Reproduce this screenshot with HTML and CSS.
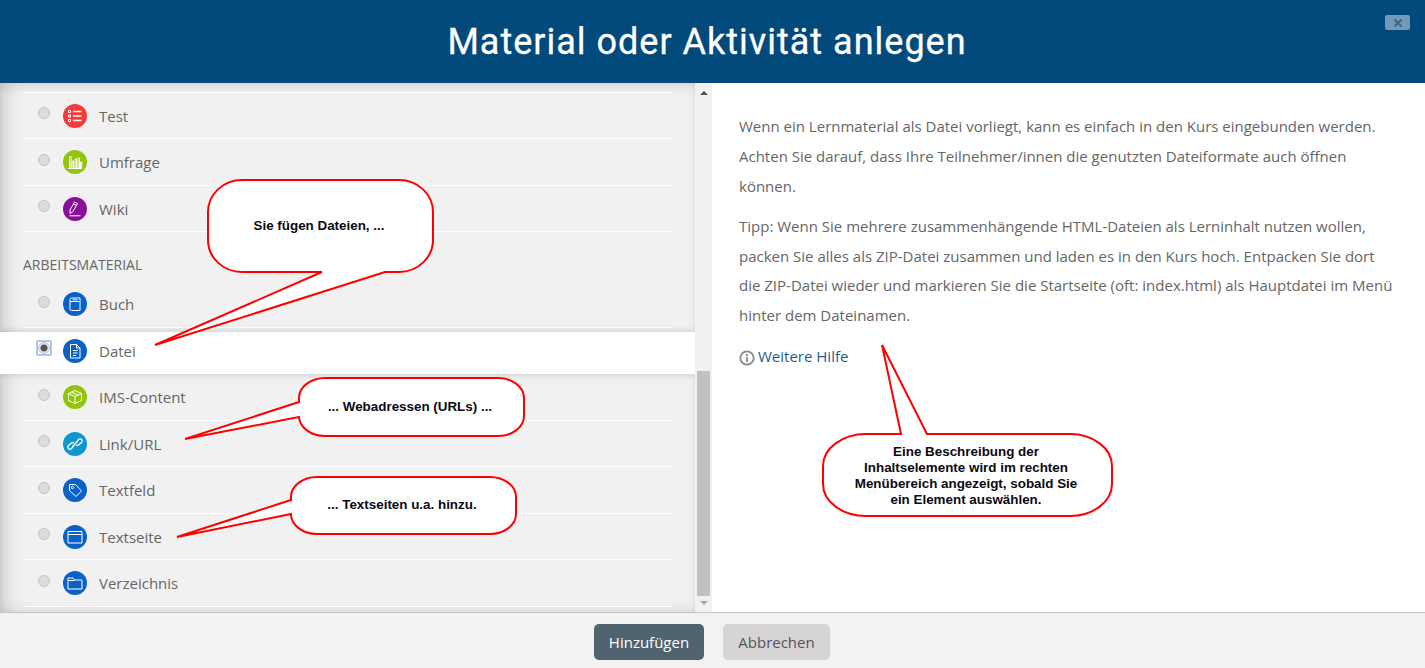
FILE: index.html
```html
<!DOCTYPE html>
<html lang="de">

<head>
  <meta charset="UTF-8">
  <title>Material oder Aktivität anlegen</title>
  <link rel="stylesheet" href="styles.css">
</head>

<body>
  <header class="dialog-head">
    <h1>Material oder Aktivität anlegen</h1>
    <button class="close-btn" type="button" aria-label="Schließen">
      <svg viewBox="0 0 10 10" width="10" height="10"><path d="M1.5 1.5l7 7M8.5 1.5l-7 7" /></svg>
    </button>
  </header>

  <main class="dialog-body">
    <section class="chooser">
      <div class="row row-first">
        <input type="radio" name="module" class="radio">
        <span class="icon icon-red">
          <svg viewBox="0 0 24 24"><path d="M10 7.500h8.500M10 12h8.500M10 16.500h8.500" stroke-width="1.300" /><path d="M5.500 6.500h2v2h-2zM5.500 11h2v2h-2zM5.500 15.500h2v2h-2z" /></svg>
        </span>
        <span class="label">Test</span>
      </div>
      <div class="row">
        <input type="radio" name="module" class="radio">
        <span class="icon icon-green">
          <svg viewBox="0 0 24 24"><path d="M5 18.500h14M6.500 18V6.500h1.500V18M9 18v-7h1.500v7M12 18V9h1.500v9M15 18V8h1.500v10M17.500 18v-6h1.200v6" /></svg>
        </span>
        <span class="label">Umfrage</span>
      </div>
      <div class="row">
        <input type="radio" name="module" class="radio">
        <span class="icon icon-purple">
          <svg viewBox="0 0 24 24"><path d="M7 16.500v-3.500l4.500-8 3 1.500-4.500 8zM10.500 7l3 1.500M6.500 18.800h11" /></svg>
        </span>
        <span class="label">Wiki</span>
      </div>

      <h2 class="group-title">Arbeitsmaterial</h2>

      <div class="row">
        <input type="radio" name="module" class="radio">
        <span class="icon icon-blue">
          <svg viewBox="0 0 24 24"><path d="M7 7.500q0-1.500 1.500-1.500h8.500v12.500H8.500Q7 18.500 7 17zM7 9.500h10M9.500 7.800h5" /></svg>
        </span>
        <span class="label">Buch</span>
      </div>
      <div class="row row-selected">
        <span class="focus-ring"><input type="radio" name="module" class="radio" checked></span>
        <span class="icon icon-blue">
          <svg viewBox="0 0 24 24"><path d="M7.500 5.500h6l3.500 3.500v10H7.500zM13.500 5.500V9H17M10 11.500h4.500M10 14h4.500M10 16.500h3" /></svg>
        </span>
        <span class="label">Datei</span>
      </div>
      <div class="row">
        <input type="radio" name="module" class="radio">
        <span class="icon icon-green">
          <svg viewBox="0 0 24 24"><path d="M12 5.500l6.500 3v7l-6.500 3-6.500-3v-7zM5.500 8.500l6.500 3 6.500-3M12 11.500v7M8.500 7l6.500 3" /></svg>
        </span>
        <span class="label">IMS-Content</span>
      </div>
      <div class="row">
        <input type="radio" name="module" class="radio">
        <span class="icon icon-cyan">
          <svg viewBox="0 0 24 24"><path d="M11 13.500l-2.500 3a2 2 0 0 1-3-3l3-2.500a2 2 0 0 1 2.500 0M13 10.500l2.500-3a2 2 0 0 1 3 3l-3 2.500a2 2 0 0 1-2.500 0M9.500 14.500l5-5" stroke-width="1.300" /></svg>
        </span>
        <span class="label">Link/URL</span>
      </div>
      <div class="row">
        <input type="radio" name="module" class="radio">
        <span class="icon icon-blue">
          <svg viewBox="0 0 24 24"><path d="M6.500 6.500h6l6 6.500-5.500 5.500-6.500-6z" /><circle cx="9.500" cy="9.500" r="1.200" /></svg>
        </span>
        <span class="label">Textfeld</span>
      </div>
      <div class="row">
        <input type="radio" name="module" class="radio">
        <span class="icon icon-blue">
          <svg viewBox="0 0 24 24"><path d="M5 6.500h14v11.500H5zM5 9.500h14" /></svg>
        </span>
        <span class="label">Textseite</span>
      </div>
      <div class="row">
        <input type="radio" name="module" class="radio">
        <span class="icon icon-blue">
          <svg viewBox="0 0 24 24"><path d="M5 7h5l1.500 2H19v9H5zM5 9.500h6.500" /></svg>
        </span>
        <span class="label">Verzeichnis</span>
      </div>
    </section>

    <div class="scrollbar">
      <span class="arrow arrow-up"></span>
      <div class="track"><div class="thumb"></div></div>
      <span class="arrow arrow-down"></span>
    </div>

    <section class="help">
      <p>Wenn ein Lernmaterial als Datei vorliegt, kann es einfach in den Kurs eingebunden werden. Achten Sie darauf, dass Ihre Teilnehmer/innen die genutzten Dateiformate auch öffnen können.</p>
      <p>Tipp: Wenn Sie mehrere zusammenhängende HTML-Dateien als Lerninhalt nutzen wollen, packen Sie alles als ZIP-Datei zusammen und laden es in den Kurs hoch. Entpacken Sie dort die ZIP-Datei wieder und markieren Sie die Startseite (oft: index.html) als Hauptdatei im Menü hinter dem Dateinamen.</p>
      <p class="more">
        <svg class="info" viewBox="0 0 16 16" width="16" height="16"><circle cx="8" cy="8" r="6.700" /><path d="M8 7v5M8 4v2" /></svg>
        <a href="#">Weitere Hilfe</a>
      </p>
    </section>
  </main>

  <footer class="dialog-foot">
    <button class="btn btn-primary" type="button">Hinzufügen</button>
    <button class="btn btn-cancel" type="button">Abbrechen</button>
  </footer>

  <!-- annotations drawn over the screenshot -->
  <svg class="notes" viewBox="0 0 1425 668" width="1425" height="668">
    <path d="M242 180H399A34 32 0 0 1 433 212V240A34 32 0 0 1 399 272H385L155 345 322 272H242A34 32 0 0 1 208 240V212A34 32 0 0 1 242 180Z" />
    <text x="319" y="230">Sie fügen Dateien, ...</text>

    <path d="M325 378H497A26 20 0 0 1 524 398V416A26 20 0 0 1 497 436H325A26 20 0 0 1 299 416V417L185 439 299 402V398A26 20 0 0 1 325 378Z" />
    <text x="410" y="411">... Webadressen (URLs) ...</text>

    <path d="M317 477H490A26 20 0 0 1 516 497V514A26 20 0 0 1 490 534H317A26 20 0 0 1 291 514L177 537 291 500V497A26 20 0 0 1 317 477Z" />
    <text x="402" y="509">... Textseiten u.a. hinzu.</text>

    <path d="M866 434H901L882 345 927 434H1070A42 32 0 0 1 1112 466V484A42 32 0 0 1 1070 516H866A43 32 0 0 1 823 484V466A43 32 0 0 1 866 434Z" />
    <text x="966" y="456">Eine Beschreibung der</text>
    <text x="966" y="472">Inhaltselemente wird im rechten</text>
    <text x="966" y="488">Menübereich angezeigt, sobald Sie</text>
    <text x="966" y="504">ein Element auswählen.</text>
  </svg>
</body>

</html>
```

FILE: styles.css
```css
body {
  margin: 0;
  width: 1425px;
  height: 668px;
  overflow: hidden;
  display: flex;
  flex-direction: column;
  position: relative;
  font-family: 'Open Sans', sans-serif;
  font-size: 15px;
  color: #666;
  background-color: #fff;
}

.dialog-head {
  height: 83px;
  flex: none;
  box-sizing: border-box;
  padding-right: 11px;
  background-color: #034a7c;
  display: flex;
  align-items: center;
  justify-content: center;
  position: relative;
}

.dialog-head h1 {
  margin: 0;
  font-family: Roboto, sans-serif;
  font-size: 36px;
  font-weight: 400;
  letter-spacing: 1px;
  -webkit-text-stroke: .3px #fff;
  color: #fff;
}

.close-btn {
  position: absolute;
  top: 15px;
  right: 15px;
  width: 25px;
  height: 15px;
  padding: 0;
  border: none;
  border-radius: 2px;
  background-color: #7399b8;
  display: flex;
  align-items: center;
  justify-content: center;
}

.close-btn path {
  fill: none;
  stroke: #3f6788;
  stroke-width: 2.2;
}

.dialog-body {
  flex: 1;
  min-height: 0;
  display: flex;
}

/* left list */
.chooser {
  width: 695px;
  flex: none;
  box-sizing: border-box;
  padding-top: 9px;
  overflow: hidden;
  background-color: #f1f1f1;
  box-shadow: inset 0 7px 12px -4px rgba(0, 0, 0, .12), inset 18px 0 18px -10px rgba(0, 0, 0, .12), inset 0 -7px 12px -4px rgba(0, 0, 0, .08);
}

.row {
  height: 46.5px;
  box-sizing: border-box;
  margin: 0 23px;
  padding-left: 15px;
  display: flex;
  align-items: center;
  border-bottom: 1px solid #fff;
}

.row-first {
  height: 47.4px;
  border-top: 1px solid #fff;
}

.row-selected {
  height: 42px;
  margin: 4.400px 0 0;
  padding: 0 0 4px 36px;
  border-bottom: none;
  background-color: #fff;
  box-shadow: 0 0 7px rgba(0, 0, 0, .2);
  position: relative;
}

.radio {
  appearance: none;
  box-sizing: border-box;
  width: 12px;
  height: 12px;
  margin: 0 13px 5px 0;
  flex: none;
  border: 1px solid #c4c4c4;
  border-radius: 50%;
  background-color: #dcdcdc;
}

.radio:checked {
  display: block;
  margin: 0;
  background: radial-gradient(circle, #555 0 3px, #e4e4e4 4px);
}

.focus-ring {
  flex: none;
  margin: 0 11px 7px 0;
  border: 2px solid #a9c7f5;
  border-radius: 2px;
}

.icon {
  width: 24px;
  height: 24px;
  flex: none;
  margin-right: 12px;
  border-radius: 50%;
}

.icon svg {
  display: block;
  width: 24px;
  height: 24px;
  fill: none;
  stroke: #fff;
  stroke-width: 1;
}

.icon-red { background-color: #f93a3a; }
.icon-green { background-color: #93c60a; }
.icon-purple { background-color: #8a0e9a; }
.icon-blue { background-color: #0a62c8; }
.icon-cyan { background-color: #0f97d2; }

.group-title {
  height: 49.2px;
  box-sizing: border-box;
  margin: 0 23px;
  padding-top: 22.600px;
  font-size: 14px;
  font-weight: 400;
  line-height: 20px;
  text-transform: uppercase;
  color: #666;
}

/* fake scrollbar */
.scrollbar {
  width: 17px;
  flex: none;
  display: flex;
  flex-direction: column;
  align-items: center;
  background-color: #f1f1f1;
}

.arrow {
  width: 0;
  height: 0;
  flex: none;
  border-left: 4px solid transparent;
  border-right: 4px solid transparent;
}

.arrow-up {
  margin-top: 8px;
  border-bottom: 4px solid #505050;
}

.arrow-down {
  margin-bottom: 7px;
  border-top: 4px solid #a3a3a3;
}

.track {
  flex: 1;
  width: 100%;
  display: flex;
  justify-content: center;
}

.thumb {
  width: 13px;
  height: 225px;
  margin-top: 276px;
  background-color: #c1c1c1;
}

/* right description */
.help {
  flex: 1;
  padding: 29px 27px 0;
  line-height: 29.8px;
}

.help p {
  margin: 0 0 10.500px;
}

.more {
  display: flex;
  align-items: center;
  gap: 3px;
}

.info {
  margin-top: 4px;
}

.info circle, .info path {
  fill: none;
  stroke: #888;
  stroke-width: 1.800;
}

.more a {
  color: #1d5f8e;
  text-decoration: none;
}

/* buttons */
.dialog-foot {
  height: 56px;
  flex: none;
  box-sizing: border-box;
  border-top: 1px solid #c4c4c4;
  background-color: #f2f2f2;
  padding: 11px 1px 0 0;
  display: flex;
  justify-content: center;
  align-items: flex-start;
  gap: 19px;
}

.btn {
  height: 36px;
  padding: 0;
  border: none;
  border-radius: 5px;
  font-family: 'Open Sans', sans-serif;
  font-size: 15px;
}

.btn-primary {
  width: 110px;
  background-color: #4f646e;
  color: #fff;
}

.btn-cancel {
  width: 107px;
  background-color: #d6d4d5;
  color: #555;
}

.notes {
  position: absolute;
  top: 0;
  left: 0;
  pointer-events: none;
}

.notes path {
  fill: #fff;
  stroke: #f00;
  stroke-width: 2;
}

.notes text {
  font-family: 'Liberation Sans', sans-serif;
  font-size: 13.4px;
  font-weight: bold;
  text-anchor: middle;
  fill: #0a0a14;
}
```
